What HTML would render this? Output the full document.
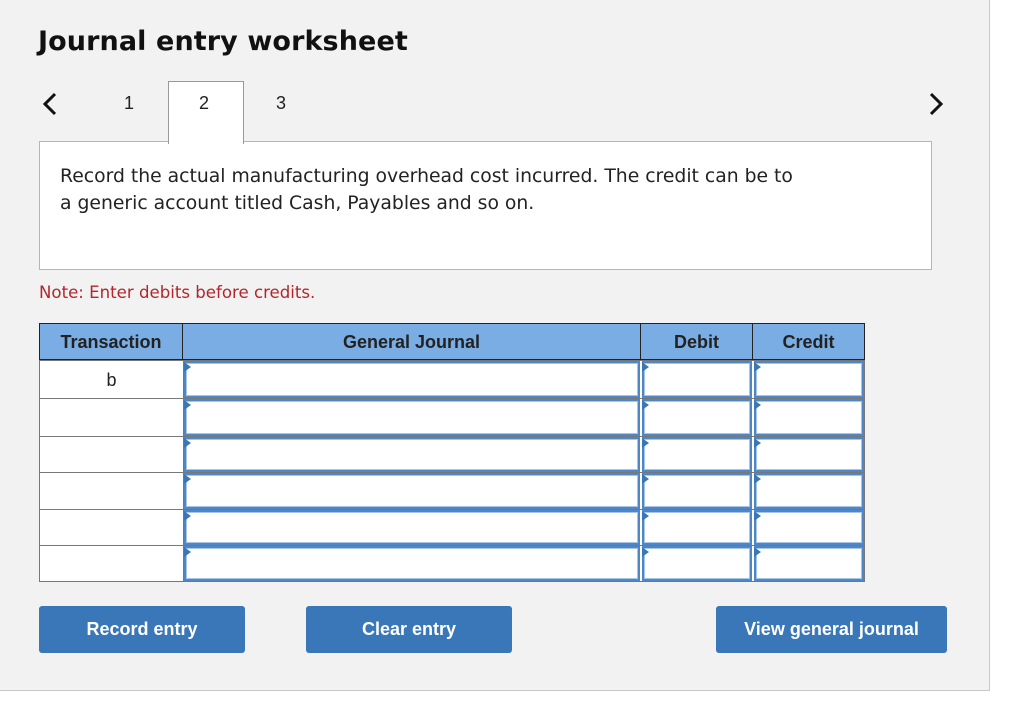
<!DOCTYPE html>
<html><head><style>
body{margin:0;width:1012px;height:724px;background:#fff;position:relative;overflow:hidden;font-family:"Liberation Sans",Arial,sans-serif}
.panel{position:absolute;left:0;top:0;width:989px;height:690px;background:#f2f2f2;border-right:1px solid #c8c8c8;border-bottom:1px solid #c8c8c8}
.a{position:absolute}
h1{position:absolute;left:38px;top:26px;margin:0;font:bold 27px "DejaVu Sans",Verdana,sans-serif;color:#111;letter-spacing:0.1px}
.tab{position:absolute;top:93px;font-size:18px;color:#222}
.box{position:absolute;left:39px;top:141px;width:891px;height:127px;background:#fff;border:1px solid #b5b5b5}
.box p{margin:21px 20px;font:18.8px/27px "DejaVu Sans",Verdana,sans-serif;color:#222;width:742px}
.note{position:absolute;left:39px;top:283px;font:16.6px "DejaVu Sans",Verdana,sans-serif;color:#b3262b}
.hd{position:absolute;top:323px;height:37px;background:#7aade3;border:1px solid #222;border-left:none;font-weight:bold;font-size:18px;color:#222;text-align:center;line-height:36px;box-sizing:border-box}
.cell{position:absolute;background:#fff;border:1px solid #777;box-sizing:border-box}
.inp{position:absolute;background:#fff;border:2px solid #4f86c6;box-shadow:inset 0 0 0 1px #a8c4e6;box-sizing:border-box}
.tri{position:absolute;width:0;height:0;border-top:5px solid transparent;border-bottom:5px solid transparent;border-left:7px solid #3a77b8}
.btn{position:absolute;top:606px;height:47px;background:#3a77b8;border-radius:3px;color:#fff;font-weight:bold;font-size:18px;text-align:center;line-height:47px}
</style></head><body>
<div class="panel"></div>
<h1>Journal entry worksheet</h1>
<svg class="a" style="left:40px;top:91px" width="20" height="26"><path d="M15 3 L5 13 L15 23" fill="none" stroke="#111" stroke-width="3"/></svg>
<svg class="a" style="left:926px;top:91px" width="20" height="26"><path d="M5 3 L15 13 L5 23" fill="none" stroke="#111" stroke-width="3"/></svg>
<div class="tab" style="left:124px">1</div>
<div class="a" style="left:168px;top:81px;width:74px;height:62px;background:#fff;border:1px solid #999;border-bottom:none;z-index:2"></div>
<div class="tab" style="left:199px;z-index:3">2</div>
<div class="tab" style="left:276px">3</div>
<div class="box"><p>Record the actual manufacturing overhead cost incurred. The credit can be to a generic account titled Cash, Payables and so on.</p></div>
<div class="note">Note: Enter debits before credits.</div>
<div class="hd" style="left:39px;width:144px;border-left:1px solid #222">Transaction</div>
<div class="hd" style="left:183px;width:458px">General Journal</div>
<div class="hd" style="left:641px;width:112px">Debit</div>
<div class="hd" style="left:753px;width:112px">Credit</div>
<div id="rows"></div>
<script>
var tops=[360,398,436,472,509,545,581],h='';
for(var i=0;i<6;i++){var t=tops[i],hh=tops[i+1]-t+1;
h+='<div class="cell" style="left:39px;top:'+t+'px;width:145px;height:'+hh+'px;text-align:center;font-size:18px;line-height:38px;color:#222">'+(i==0?'b':'')+'</div>';
h+='<div class="cell" style="left:183px;top:'+t+'px;width:682px;height:'+hh+'px;border-color:#777"></div>';
[[183,457],[641,111],[753,111]].forEach(function(c){
h+='<div class="inp" style="left:'+(c[0]+1)+'px;top:'+(t+1)+'px;width:'+(c[1]-1)+'px;height:'+(hh-2)+'px"></div>';
h+='<div class="tri" style="left:'+(c[0]+1)+'px;top:'+(t+2)+'px"></div>';});}
document.getElementById('rows').innerHTML=h;
</script>
<div class="btn" style="left:39px;width:206px">Record entry</div>
<div class="btn" style="left:306px;width:206px">Clear entry</div>
<div class="btn" style="left:716px;width:231px">View general journal</div>
</body></html>
